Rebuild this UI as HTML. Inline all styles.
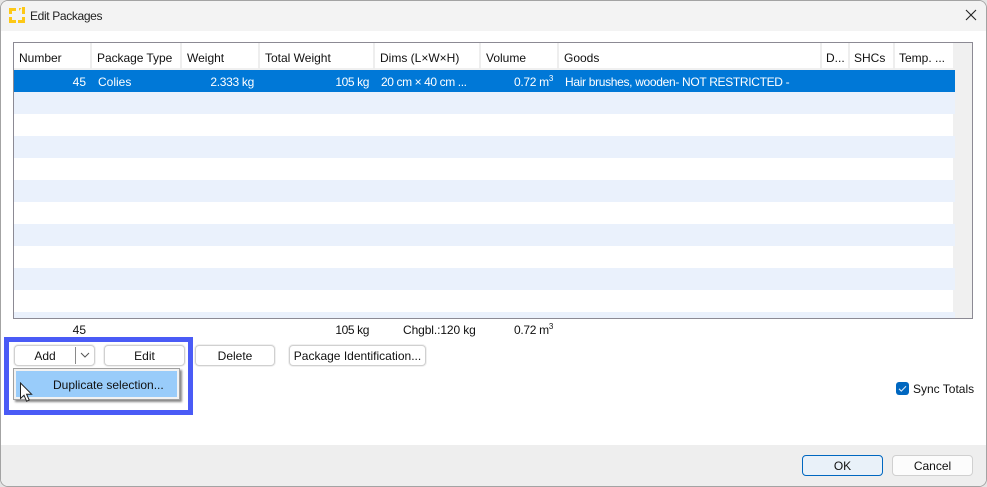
<!DOCTYPE html>
<html><head><meta charset="utf-8"><style>
html,body{margin:0;padding:0;width:987px;height:487px;overflow:hidden;background:#e4e4e4}
*{box-sizing:border-box}
#w{position:absolute;left:0;top:0;width:987px;height:487px;background:#fff;border:1px solid #a3a3a3;border-radius:8px;overflow:hidden}
#r{position:absolute;left:0;top:0;width:987px;height:487px;font:12px "Liberation Sans",sans-serif;color:#111}
.a{position:absolute}
.t{position:absolute;white-space:nowrap;line-height:16px}
.tr{text-align:right}
.w{color:#fff}
.n{letter-spacing:-.4px}
sup{font-size:8px;line-height:0;vertical-align:5px}
.sep{position:absolute;top:43px;height:26px;width:2px;background:#eeeeee}
.row{position:absolute;left:14px;width:941px;height:22px;background:#eaf1fc}
.b{position:absolute;height:21px;top:345px;background:#fff;border:1px solid #d0d0d0;border-radius:4px;text-align:center;line-height:20px;box-shadow:0 0 0 1px #f0f0f0;white-space:nowrap}
</style></head><body>
<div id="w"></div>
<div id="r">
<div class="a" style="left:1px;top:1px;width:985px;height:30px;background:#f3f3f3;border-radius:7px 7px 0 0"></div>
<div class="a" style="left:1px;top:445px;width:985px;height:41px;background:#eeeeee;border-radius:0 0 7px 7px"></div>
<svg class="a" style="left:9px;top:7px" width="16" height="16" viewBox="0 0 16 16"><path fill="#fdc816" d="M0 1h7v3H3v3H0zM10 1h2.500l-2.500 3zM13 0h3v7h-3zM0 10h3v3h4v3H0zM9 13h4v-3h3v6H9z"/></svg>
<span class="t" style="left:30px;top:8px;color:#222;letter-spacing:-.35px">Edit Packages</span>
<svg class="a" style="left:965px;top:9px" width="12" height="12" viewBox="0 0 12 12"><path d="M1 1l10 10M11 1L1 11" stroke="#222" stroke-width="1.100" fill="none"/></svg>

<div class="a" style="left:13px;top:42px;width:960px;height:277px;border:1px solid #8c8a94;background:#fff"></div>
<div class="a" style="left:953px;top:43px;width:19px;height:275px;background:#f0f0f0"></div>
<div class="a" style="left:14px;top:68px;width:939px;height:2px;background:#f0f0f0"></div>
<div class="sep" style="left:90px"></div><div class="sep" style="left:180px"></div><div class="sep" style="left:258px"></div><div class="sep" style="left:373px"></div><div class="sep" style="left:479px"></div><div class="sep" style="left:557px"></div><div class="sep" style="left:820px"></div><div class="sep" style="left:848px"></div><div class="sep" style="left:893px"></div>
<span class="t" style="left:19px;top:50px">Number</span>
<span class="t" style="left:97px;top:50px;letter-spacing:-.05px">Package Type</span>
<span class="t" style="left:187px;top:50px">Weight</span>
<span class="t" style="left:265px;top:50px">Total Weight</span>
<span class="t" style="left:380px;top:50px">Dims (L×W×H)</span>
<span class="t" style="left:486px;top:50px">Volume</span>
<span class="t" style="left:564px;top:50px">Goods</span>
<span class="t" style="left:826px;top:50px">D...</span>
<span class="t" style="left:854px;top:50px">SHCs</span>
<span class="t" style="left:899px;top:50px">Temp. ...</span>

<div class="a" style="left:14px;top:70px;width:941px;height:22px;background:#0078d7"></div>
<div class="row" style="top:92px"></div><div class="row" style="top:136px"></div><div class="row" style="top:180px"></div><div class="row" style="top:224px"></div><div class="row" style="top:268px"></div><div class="row" style="top:312px;height:6px"></div>
<span class="t w tr" style="right:901px;top:74px">45</span>
<span class="t w" style="left:98px;top:74px">Colies</span>
<span class="t w tr" style="right:733px;top:74px;letter-spacing:-.3px">2.333 kg</span>
<span class="t w tr n" style="right:618px;top:74px">105 kg</span>
<span class="t w" style="left:381px;top:74px;letter-spacing:-.4px">20 cm × 40 cm ...</span>
<span class="t w tr" style="right:434px;top:74px;letter-spacing:-.3px">0.72 m<sup>3</sup></span>
<span class="t w" style="left:565px;top:74px;letter-spacing:-.32px">Hair brushes, wooden- NOT RESTRICTED -</span>

<span class="t tr" style="right:901px;top:322px">45</span>
<span class="t tr n" style="right:618px;top:322px">105 kg</span>
<span class="t" style="left:403px;top:322px;letter-spacing:-.1px">Chgbl.:120 kg</span>
<span class="t tr" style="right:434px;top:322px;letter-spacing:-.3px">0.72 m<sup>3</sup></span>

<div class="a" style="left:4px;top:337px;width:189px;height:78px;border:5px solid #4a5bf6"></div>
<div class="b" style="left:14px;width:81px;padding-right:19px">Add</div>
<div class="a" style="left:75px;top:347px;width:1px;height:17px;background:#8a8a8a"></div>
<svg class="a" style="left:80px;top:352px" width="10" height="7" viewBox="0 0 10 7"><path d="M1 1l4 4 4-4" stroke="#555" stroke-width="1" fill="none"/></svg>
<div class="b" style="left:104px;width:81px">Edit</div>
<div class="b" style="left:195px;width:80px">Delete</div>
<div class="b" style="left:289px;width:137px">Package Identification...</div>

<div class="a" style="left:13px;top:368px;width:167px;height:32px;background:#f2f2f2;border:1px solid #a0a0a0;box-shadow:2px 2px 2px #888"></div>
<div class="a" style="left:16px;top:371px;width:161px;height:26px;background:#99ccfa"></div>
<span class="t" style="left:53px;top:377px">Duplicate selection...</span>
<svg class="a" style="left:19px;top:382px" width="15" height="22" viewBox="0 0 15 22"><path d="M1.500 1v15.500l3.500-3.300 2.600 6 2.600-1.200-2.600-5.800h5z" fill="#fff" stroke="#222" stroke-width="1"/></svg>

<div class="a" style="left:896px;top:382px;width:13px;height:13px;background:#0067c0;border-radius:3px"></div>
<svg class="a" style="left:896px;top:382px" width="13" height="13" viewBox="0 0 13 13"><path d="M3 6.800l2.300 2.300L10 4.200" stroke="#dbe9f7" stroke-width="1.100" fill="none"/></svg>
<span class="t" style="left:913px;top:381px">Sync Totals</span>

<div class="a" style="left:802px;top:455px;width:81px;height:21px;background:#e9f1f9;border:1px solid #0067c0;border-radius:4px;text-align:center;line-height:20px">OK</div>
<div class="a" style="left:892px;top:455px;width:81px;height:21px;background:#fcfcfc;border:1px solid #d0d0d0;border-radius:4px;text-align:center;line-height:20px">Cancel</div>
</div>
</body></html>
